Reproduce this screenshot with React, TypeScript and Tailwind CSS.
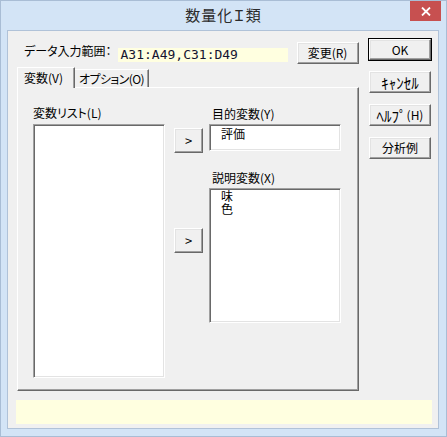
import React from "react";

const raised =
  "border border-t-white border-l-white border-r-[#696969] border-b-[#696969] shadow-[inset_-1px_-1px_0_#a0a0a0,inset_1px_1px_0_#e3e3e3] bg-[#f0f0f0]";
const sunken =
  "border border-t-[#a0a0a0] border-l-[#a0a0a0] border-r-white border-b-white shadow-[inset_1px_1px_0_#696969,inset_-1px_-1px_0_#e3e3e3] bg-white";

function Btn({ children, className = "" }: { children: React.ReactNode; className?: string }) {
  return (
    <div className={`flex items-center justify-center text-[12px] leading-none text-black whitespace-nowrap ${raised} ${className}`}>
      {children}
    </div>
  );
}

export default function App() {
  return (
    <div className="w-[447px] h-[437px] bg-[#d3e4f6] border border-[#a9bdd5] flex flex-col font-['Noto_Sans_CJK_JP',sans-serif] [font-feature-settings:'palt'] text-black select-none">
      {/* title bar */}
      <div className="relative h-[29px] flex items-center justify-center">
        <span className="text-[15px] text-[#2b2b2b] tracking-[1px] -mt-[1px]">数量化Ｉ類</span>
        <div className="absolute right-[5px] top-0 w-[31px] h-[20px] bg-[#c75050] flex items-center justify-center">
          <svg width="10" height="9" viewBox="0 0 10 9">
            <path d="M1 0.5 L9 8.5 M9 0.5 L1 8.5" stroke="white" strokeWidth="1.8" />
          </svg>
        </div>
      </div>

      {/* client area */}
      <div className="ml-[6px] w-[432px] h-[399px] border border-[#b0c2d8] bg-[#f0f0f0] flex flex-col">
        <div className="flex pt-[7px]">
          {/* left column */}
          <div className="ml-[8px] w-[343px] flex flex-col">
            <div className="flex items-start mt-[4px] h-[22px]">
              <span className="ml-[8px] mt-[1px] text-[12px] leading-[16px] whitespace-nowrap">データ入力範囲：</span>
              <div className="ml-[6px] mt-[6px] w-[170px] h-[14px] bg-[#ffffe0] pl-[3px] font-['DejaVu_Sans_Mono',monospace] text-[13px] leading-[14px] text-[#141430] [font-feature-settings:normal]">
                A31:A49,C31:D49
              </div>
              <Btn className="ml-[9px] w-[62px] h-[22px]">変更(R)</Btn>
            </div>

            {/* tabs */}
            <div className="flex items-end h-[22px] mt-[1px] relative z-10">
              <div className="ml-[1px] w-[58px] h-[21px] bg-[#f0f0f0] border-t border-l border-r border-t-white border-l-white border-r-[#696969] shadow-[inset_-1px_0_0_#a0a0a0] flex items-center pl-[6px] text-[12px] leading-none whitespace-nowrap -mb-[1px]">
                変数(V)
              </div>
              <div className="w-[74px] h-[18px] border-t border-r border-t-white border-r-[#696969] shadow-[inset_-1px_0_0_#a0a0a0] flex items-center pl-[4px] text-[12px] tracking-[-0.6px] leading-none whitespace-nowrap overflow-hidden">
                オプション(O)
              </div>
            </div>

            {/* panel */}
            <div className="ml-[1px] w-[342px] h-[304px] border border-t-white border-l-white border-r-[#696969] border-b-[#696969] shadow-[inset_-1px_-1px_0_#a0a0a0] flex">
              <div className="ml-[15px] pt-[17px] flex flex-col">
                <span className="text-[12px] leading-[16px] whitespace-nowrap">変数リスト(L)</span>
                <div className={`mt-[3px] w-[132px] h-[254px] ${sunken}`} />
              </div>
              <div className="ml-[9px] pt-[40px] flex flex-col">
                <Btn className="w-[29px] h-[25px]">
                  <span className="text-[13px]">&gt;</span>
                </Btn>
                <Btn className="mt-[75px] w-[29px] h-[25px]">
                  <span className="text-[13px]">&gt;</span>
                </Btn>
              </div>
              <div className="ml-[6px] pt-[18px] flex flex-col">
                <span className="pl-[3px] text-[12px] leading-[16px] whitespace-nowrap">目的変数(Y)</span>
                <div className={`mt-[2px] w-[132px] h-[27px] pl-[11px] pt-[1px] text-[12px] leading-[16px] ${sunken}`}>評価</div>
                <span className="mt-[19px] pl-[3px] text-[12px] leading-[16px] whitespace-nowrap">説明変数(X)</span>
                <div className={`mt-[2px] w-[132px] h-[135px] pl-[11px] text-[12px] leading-[13px] ${sunken}`}>
                  <div>味</div>
                  <div>色</div>
                </div>
              </div>
            </div>
          </div>

          {/* right buttons */}
          <div className="ml-[9px] flex flex-col">
            <div className="w-[64px] h-[23px] border border-black">
              <Btn className="w-full h-full">OK</Btn>
            </div>
            <Btn className="mt-[10px] ml-[1px] w-[62px] h-[22px]">
              <span className="text-[15px] [font-feature-settings:normal]">ｷｬﾝｾﾙ</span>
            </Btn>
            <Btn className="mt-[11px] ml-[1px] w-[62px] h-[22px]">
              <span className="text-[15px] [font-feature-settings:normal]">ﾍﾙﾌﾟ</span>
              <span>(H)</span>
            </Btn>
            <Btn className="mt-[11px] ml-[1px] w-[62px] h-[22px]">分析例</Btn>
          </div>
        </div>

        {/* status bar */}
        <div className="ml-[8px] mt-[9px] w-[416px] h-[24px] bg-[#ffffe0]" />
      </div>
    </div>
  );
}
